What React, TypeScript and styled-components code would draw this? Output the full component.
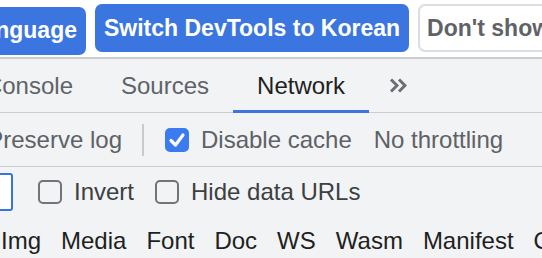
import React from 'react';
import styled, { createGlobalStyle } from 'styled-components';

const GlobalStyle = createGlobalStyle`
  *, *::before, *::after { box-sizing: border-box; }
  html, body { margin: 0; padding: 0; background: #f1f3f4; overflow: hidden; }
  body { font-family: 'Liberation Sans', Arial, Helvetica, sans-serif; font-size: 24px; }
`;

const Panel = styled.div`
  width: 542px;
  height: 258px;
  overflow: hidden;
  background: #f1f3f4;
`;

// a slot whose content is scrolled off to the left: items hug its right edge
const Clip = styled.div<{ $width: number }>`
  flex: 0 0 ${(p) => p.$width}px;
  width: ${(p) => p.$width}px;
  min-width: 0;
  display: flex;
  justify-content: flex-end;
  align-items: center;
  align-self: stretch;
  & > * {
    flex-shrink: 0;
  }
`;

// ---------------------------------------------
// infobar
// ---------------------------------------------
const Infobar = styled.div`
  height: 59px;
  padding-top: 4px;
  background: #ffffff;
  border-bottom: 2px solid #cbcdd1;
  display: flex;
  align-items: flex-start;
  gap: 9px;
  white-space: nowrap;
`;

const InfoButton = styled.button<{ $primary?: boolean }>`
  flex-shrink: 0;
  height: 48px;
  padding: 0 7px;
  border-radius: 7px;
  border: 2px solid ${(p) => (p.$primary ? '#3b76e0' : '#dcdde0')};
  background: ${(p) => (p.$primary ? '#3b76e0' : '#ffffff')};
  color: ${(p) => (p.$primary ? '#ffffff' : '#5f6368')};
  font: 700 23px 'Liberation Sans', Arial, sans-serif;
  white-space: nowrap;
`;

// ---------------------------------------------
// tabs
// ---------------------------------------------
const TabBar = styled.div`
  height: 54px;
  display: flex;
  border-bottom: 1px solid #cbcdd1;
  white-space: nowrap;
`;

const Tab = styled.div<{ $selected?: boolean }>`
  height: 54px;
  margin-bottom: -1px;
  padding: 3px 24px 0;
  display: flex;
  align-items: center;
  border-bottom: 3px solid ${(p) => (p.$selected ? '#3b76e0' : 'transparent')};
  color: ${(p) => (p.$selected ? '#1f1f1f' : '#5f6368')};
`;

const MoreTabs = styled.div`
  padding: 0 20px;
  display: flex;
  align-items: center;
  color: #6b6e73;
`;

// ---------------------------------------------
// toolbars
// ---------------------------------------------
const Toolbar = styled.div<{ $height: number; $border?: boolean; $color: string }>`
  height: ${(p) => p.$height}px;
  display: flex;
  align-items: center;
  color: ${(p) => p.$color};
  white-space: nowrap;
  border-bottom: ${(p) => (p.$border ? '1px solid #cbcdd1' : 'none')};
`;

const Label = styled.label<{ $gap?: number }>`
  display: flex;
  flex-shrink: 0;
  align-items: center;
  gap: 12px;
  margin-left: ${(p) => p.$gap ?? 0}px;
`;

const Box = styled.span<{ $checked?: boolean }>`
  flex-shrink: 0;
  width: 24px;
  height: 24px;
  border-radius: 5px;
  border: 2px solid ${(p) => (p.$checked ? '#3a7bf0' : '#717478')};
  background: ${(p) => (p.$checked ? '#3a7bf0' : 'transparent')};
  display: inline-flex;
  align-items: center;
  justify-content: center;
`;

const Divider = styled.div`
  flex-shrink: 0;
  width: 2px;
  height: 32px;
  margin: 0 20px;
  background: #c8cacd;
`;

const Throttle = styled.div`
  flex-shrink: 0;
  margin-left: 22px;
`;

const FilterInput = styled.div`
  width: 300px;
  height: 38px;
  border: 2px solid #3874e0;
  border-radius: 3px;
  background: #ffffff;
`;

const TypeButton = styled.div`
  flex-shrink: 0;
  padding: 0 10px;
  color: #1f1f1f;
`;

function Checkbox({ checked, children, gap }: { checked?: boolean; children: React.ReactNode; gap?: number }) {
  return (
    <Label $gap={gap}>
      <Box $checked={checked}>
        {checked && (
          <svg width="18" height="18" viewBox="0 0 18 18">
            <path d="M3 9.5 L7.5 14 L15 4" fill="none" stroke="#ffffff" strokeWidth="3.2" strokeLinecap="round" strokeLinejoin="round" />
          </svg>
        )}
      </Box>
      {children}
    </Label>
  );
}

function Chevrons() {
  return (
    <svg width="18" height="15" viewBox="0 0 18 15">
      <path d="M2 1.5 L8 7.5 L2 13.5 M10 1.5 L16 7.5 L10 13.5" fill="none" stroke="currentColor" strokeWidth="3" />
    </svg>
  );
}

export default function App() {
  return (
    <Panel>
      <GlobalStyle />
      <Infobar>
        <Clip $width={86}>
          <InfoButton $primary>Always match Chrome's language</InfoButton>
        </Clip>
        <InfoButton $primary>Switch DevTools to Korean</InfoButton>
        <InfoButton>Don't show again</InfoButton>
      </Infobar>

      <TabBar>
        <Clip $width={97}>
          <Tab>Elements</Tab>
          <Tab>Console</Tab>
        </Clip>
        <Tab>Sources</Tab>
        <Tab $selected>Network</Tab>
        <MoreTabs>
          <Chevrons />
        </MoreTabs>
      </TabBar>

      <Toolbar $height={54} $border $color="#5e6166">
        <Clip $width={122}>
          <Checkbox>Preserve log</Checkbox>
        </Clip>
        <Divider />
        <Checkbox checked gap={1}>Disable cache</Checkbox>
        <Throttle>No throttling</Throttle>
      </Toolbar>

      <Toolbar $height={49} $color="#3c4043">
        <Clip $width={13}>
          <FilterInput />
        </Clip>
        <Checkbox gap={25}>Invert</Checkbox>
        <Checkbox gap={21}>Hide data URLs</Checkbox>
      </Toolbar>

      <Toolbar $height={50} $color="#1f1f1f">
        <Clip $width={51}>
          <TypeButton>JS</TypeButton>
          <TypeButton>Img</TypeButton>
        </Clip>
        <TypeButton>Media</TypeButton>
        <TypeButton>Font</TypeButton>
        <TypeButton>Doc</TypeButton>
        <TypeButton>WS</TypeButton>
        <TypeButton>Wasm</TypeButton>
        <TypeButton>Manifest</TypeButton>
        <TypeButton>Other</TypeButton>
      </Toolbar>
    </Panel>
  );
}
